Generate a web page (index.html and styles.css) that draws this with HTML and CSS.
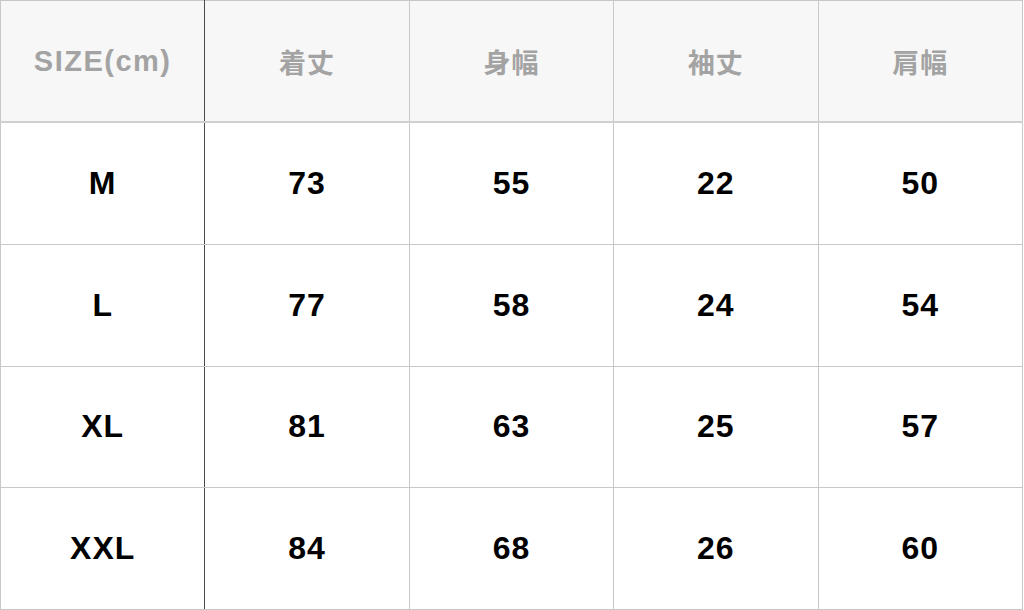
FILE: index.html
```html
<!DOCTYPE html>
<html lang="ja">
<head>
<meta charset="utf-8">
<link rel="stylesheet" href="styles.css">
</head>
<body>
<table class="size-table">
  <thead>
    <tr>
      <th class="first">SIZE(cm)</th>
      <th>着丈</th>
      <th>身幅</th>
      <th>袖丈</th>
      <th>肩幅</th>
    </tr>
  </thead>
  <tbody>
    <tr><td class="first">M</td><td>73</td><td>55</td><td>22</td><td>50</td></tr>
    <tr><td class="first">L</td><td>77</td><td>58</td><td>24</td><td>54</td></tr>
    <tr><td class="first">XL</td><td>81</td><td>63</td><td>25</td><td>57</td></tr>
    <tr><td class="first">XXL</td><td>84</td><td>68</td><td>26</td><td>60</td></tr>
  </tbody>
</table>
</body>
</html>
```
FILE: styles.css
```css
html, body {
  margin: 0;
  padding: 0;
  background: #ffffff;
}
.size-table {
  width: 1023px;
  border-collapse: collapse;
  table-layout: fixed;
  font-family: "Liberation Sans", "Noto Sans CJK JP", sans-serif;
  font-weight: bold;
}
.size-table th,
.size-table td {
  border: 1px solid #c8c8c8;
  text-align: center;
  vertical-align: middle;
  padding: 0;
  height: 120.75px;
}
.size-table th {
  background: #f7f7f7;
  color: #a3a3a3;
  font-size: 27px;
  letter-spacing: 1px;
  height: 120px;
  border-bottom: 2px solid #d0d0d0;
}
.size-table th.first {
  font-size: 29px;
  letter-spacing: 1.5px;
}
.size-table td {
  color: #000;
  font-size: 32px;
  letter-spacing: 1px;
}
.size-table .first {
  border-right: 1px solid #4a4a4a;
}
```
